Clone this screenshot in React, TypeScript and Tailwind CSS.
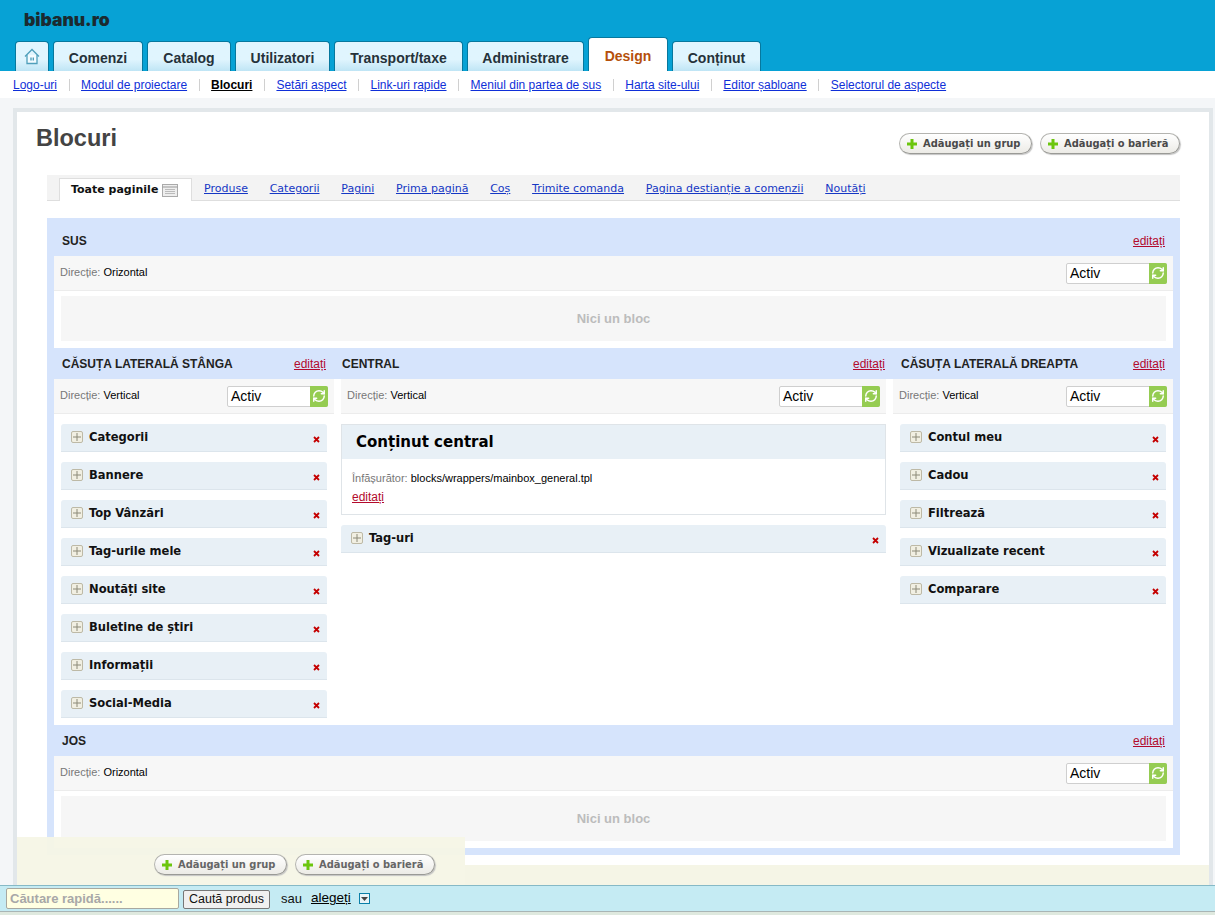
import { RefreshCw } from 'lucide-react';

const sans = "font-['Liberation_Sans',Arial,sans-serif]";
const wide = "font-['DejaVu_Sans',Verdana,sans-serif]";
const cond = "font-['DejaVu_Sans_Condensed','DejaVu_Sans',Verdana,sans-serif]";

const mainTabs = [
  { label: 'Comenzi', w: 'w-[90px]' },
  { label: 'Catalog', w: 'w-[84px]' },
  { label: 'Utilizatori', w: 'w-[95px]' },
  { label: 'Transport/taxe', w: 'w-[129px]' },
  { label: 'Administrare', w: 'w-[117px]' },
  { label: 'Design', w: 'w-[80px]', active: true },
  { label: 'Conținut', w: 'w-[89px]' },
];

const subLinks = ['Logo-uri', 'Modul de proiectare', 'Blocuri', 'Setări aspect', 'Link-uri rapide', 'Meniul din partea de sus', 'Harta site-ului', 'Editor șabloane', 'Selectorul de aspecte'];

const pageLinks = ['Produse', 'Categorii', 'Pagini', 'Prima pagină', 'Coș', 'Trimite comanda', 'Pagina destianție a comenzii', 'Noutăți'];

const leftBlocks = ['Categorii', 'Bannere', 'Top Vânzări', 'Tag-urile mele', 'Noutăți site', 'Buletine de știri', 'Informații', 'Social-Media'];
const rightBlocks = ['Contul meu', 'Cadou', 'Filtrează', 'Vizualizate recent', 'Comparare'];

function HomeIcon() {
  return (
    <svg width="16" height="17" viewBox="0 0 16 17" fill="none" stroke="#4f9fbb" strokeWidth="1.3">
      <path d="M1 8.5 8 1.5l7 7" />
      <path d="M3 7v8.5h10V7" fill="#f2fbff" />
      <rect x="6.3" y="9.5" width="1.4" height="3" fill="#4f9fbb" stroke="none" />
      <rect x="8.6" y="9.5" width="1.4" height="3" fill="#4f9fbb" stroke="none" />
    </svg>
  );
}

function GreenPlus() {
  return (
    <svg width="10" height="10" viewBox="0 0 10 10" className="shrink-0">
      <path d="M3.5 0h3v3.5H10v3H6.5V10h-3V6.5H0v-3h3.5z" fill="#6cc60e" />
    </svg>
  );
}

function PillButton({ label, w, dim }: { label: string; w: string; dim?: boolean }) {
  return (
    <button className={`${w} h-[21px] flex items-center gap-[6px] pl-[7px] rounded-[11px] border border-[#b4b4b0] border-b-[#9a9a96] border-r-[#9a9a96] bg-gradient-to-b from-white to-[#ecebe6] shadow-[1px_1px_1px_#c4c4c4]`}>
      <GreenPlus />
      <span className={`${cond} pt-px text-[11px] font-bold whitespace-nowrap ${dim ? 'text-[#666]' : 'text-[#4a4a4a]'}`}>{label}</span>
    </button>
  );
}

function Edit({ className = '' }: { className?: string }) {
  return <a className={`${sans} text-[12px] text-[#b30a2c] underline cursor-pointer ${className}`}>editați</a>;
}

function SectionHead({ title, className = '' }: { title: string; className?: string }) {
  return (
    <div className={`flex items-center justify-between px-[8px] ${className}`}>
      <span className={`${sans} text-[12px] font-bold text-[#222]`}>{title}</span>
      <Edit />
    </div>
  );
}

function StatusSelect() {
  return (
    <div className="flex h-[21px] w-[101px] rounded-[2px] border border-[#cfcfcf] bg-white">
      <span className={`${sans} flex-1 pl-[3px] text-[14px] leading-[19px] text-black`}>Activ</span>
      <span className="-my-px -mr-px flex w-[18px] items-center justify-center rounded-r-[2px] bg-[#95cc52]">
        <RefreshCw size={14} strokeWidth={2.5} className="text-white" />
      </span>
    </div>
  );
}

function DirectionBar({ value, className = '' }: { value: string; className?: string }) {
  return (
    <div className={`flex h-[35px] items-center justify-between border-b border-[#ececec] bg-[#f7f7f7] px-[6px] ${className}`}>
      <span className={`${sans} pb-[2px] text-[11px] text-[#777]`}>
        Direcție: <span className="text-black">{value}</span>
      </span>
      <StatusSelect />
    </div>
  );
}

function EmptyBlock() {
  return (
    <div className={`${sans} mx-[7px] mt-[5px] flex h-[45px] items-center justify-center bg-[#f6f6f6] text-[13px] font-bold text-[#bcbcbc]`}>
      Nici un bloc
    </div>
  );
}

function BlockRow({ label }: { label: string }) {
  return (
    <div className="flex h-[28px] items-start rounded-t-[3px] border-b border-[#dce5ec] bg-[#e8f0f6] pl-[10px] pr-[7px] pt-[7px]">
      <span className="flex h-[12px] w-[12px] items-center justify-center rounded-[2px] border border-[#bdb9a6] bg-[#f1efe2]">
        <svg width="8" height="8" viewBox="0 0 8 8"><path d="M4 0v8M0 4h8" stroke="#8c8a78" strokeWidth="1" /></svg>
      </span>
      <span className={`${cond} ml-[6px] flex-1 -mt-[2px] text-[12.8px] font-bold leading-[16px] text-[#111]`}>{label}</span>
      <svg width="7" height="7" viewBox="0 0 7 7" className="mt-[5px]"><path d="M1 1l5 5M6 1L1 6" stroke="#c40000" strokeWidth="1.8" /></svg>
    </div>
  );
}

function BlockList({ items }: { items: string[] }) {
  return (
    <div className="flex flex-col gap-[10px] px-[7px] pt-[10px]">
      {items.map(b => <BlockRow key={b} label={b} />)}
    </div>
  );
}

export default function App() {
  return (
    <div className={`${sans} relative h-[915px] w-[1215px] overflow-hidden bg-[#f4f6f8]`}>
      {/* Header */}
      <div className="h-[71px] bg-[#07a2d5] pl-[15px]">
        <div className="h-[37px] pl-[9px] pt-[9px] font-['Inter',sans-serif] text-[17.5px] font-black leading-[22px] text-[#1b2a30]">bibanu.ro</div>
        <div className="flex h-[34px] items-end gap-[4px]">
          <div className="flex h-[30px] w-[34px] items-center justify-center rounded-t-[4px] border border-b-0 border-[#06789e] bg-gradient-to-b from-[#e0f5fe] from-60% to-[#bfe5f5]">
            <HomeIcon />
          </div>
          {mainTabs.map(t => (
            <div
              key={t.label}
              className={`${t.w} flex items-center justify-center rounded-t-[4px] border border-b-0 border-[#06789e] text-[14px] font-bold ${t.active ? 'h-[34px] bg-white pt-[3px] text-[#b5500b]' : 'h-[30px] bg-gradient-to-b from-[#e0f5fe] from-60% to-[#bfe5f5] pt-[3px] text-[#25323a]'}`}
            >
              {t.label}
            </div>
          ))}
        </div>
      </div>

      {/* Sub navigation */}
      <div className="flex h-[27px] items-center bg-white pl-[13px] text-[12px]">
        {subLinks.map((l, i) => (
          <div key={l} className="flex items-center">
            {i > 0 && <span className="mx-[11.5px] h-[12px] w-px bg-[#d0d0d0]" />}
            <a className={`underline ${l === 'Blocuri' ? 'font-bold text-black' : 'text-[#0f2fd8]'}`}>{l}</a>
          </div>
        ))}
      </div>

      {/* Content */}
      <div className="ml-[13px] mr-[2px] mt-[10px] h-[807px] border-4 border-[#e2e7ea] bg-white pl-[18px] pr-[29px]">
        <div className="flex h-[63px] justify-between">
          <h1 className="pl-px pt-[10px] text-[23.5px] font-bold leading-[32px] text-[#444]">Blocuri</h1>
          <div className="flex gap-[8px] pt-[21px]">
            <PillButton label="Adăugați un grup" w="w-[133px]" />
            <PillButton label="Adăugați o barieră" w="w-[140px]" />
          </div>
        </div>

        <div className="ml-[12px] flex h-[26px] border-b border-[#dedede] bg-[#f3f3f3] pl-[12px]">
          <div className={`${wide} -mb-px mt-[3px] flex h-[23px] w-[133px] items-center gap-[4px] border border-b-0 border-[#dedede] bg-white pl-[11px] text-[11px] font-bold text-[#111]`}>
            Toate paginile
            <svg width="16" height="13" viewBox="0 0 16 13"><rect x=".5" y=".5" width="15" height="12" fill="#eee" stroke="#aaa" /><path d="M.5 3h15" stroke="#999" /><path d="M3 5.5h10M3 7.5h10M3 9.5h10" stroke="#bbb" /></svg>
          </div>
          <div className={`${wide} ml-[12px] flex items-center gap-[21.75px] pt-[4px] text-[11px] text-[#1537c4]`}>
            {pageLinks.map(l => <a key={l} className="underline whitespace-nowrap">{l}</a>)}
          </div>
        </div>

        {/* Layout panel */}
        <div className="ml-[12px] mt-[17px] h-[637px] bg-[#d6e4fc] px-[7px]">
          <SectionHead title="SUS" className="h-[38px] pt-[7px]" />
          <div className="h-[92px] bg-white">
            <DirectionBar value="Orizontal" />
            <EmptyBlock />
          </div>

          <div className="grid h-[31px] grid-cols-[280px_559px_280px]">
            <SectionHead title="CĂSUȚA LATERALĂ STÂNGA" />
            <SectionHead title="CENTRAL" />
            <SectionHead title="CĂSUȚA LATERALĂ DREAPTA" />
          </div>

          <div className="grid h-[346px] grid-cols-[280px_7px_545px_7px_280px] bg-white">
            <div>
              <DirectionBar value="Vertical" />
              <BlockList items={leftBlocks} />
            </div>
            <div />
            <div>
              <DirectionBar value="Vertical" />
              <div className="mt-[10px] border border-[#dfe4e8]">
                <div className={`${cond} flex h-[34px] items-center bg-[#e8f0f6] pl-[14px] text-[16.7px] font-bold text-black`}>Conținut central</div>
                <div className="h-[55px] pl-[10px] pt-[10px] text-[11px] leading-[19px] text-[#777]">
                  Înfășurător: <span className="text-black">blocks/wrappers/mainbox_general.tpl</span>
                  <div><Edit /></div>
                </div>
              </div>
              <div className="mt-[10px]"><BlockRow label="Tag-uri" /></div>
            </div>
            <div />
            <div>
              <DirectionBar value="Vertical" />
              <BlockList items={rightBlocks} />
            </div>
          </div>

          <SectionHead title="JOS" className="h-[31px] pt-px" />
          <div className="h-[92px] bg-white">
            <DirectionBar value="Orizontal" />
            <EmptyBlock />
          </div>
        </div>
      </div>

      {/* Sticky action strip */}
      <div className="absolute bottom-[30px] left-[17px] h-[48px] w-[448px] bg-[#f5f5e6]/95 pl-[137px] pt-[17px]">
        <div className="flex gap-[8px]">
          <PillButton label="Adăugați un grup" w="w-[133px]" dim />
          <PillButton label="Adăugați o barieră" w="w-[140px]" dim />
        </div>
      </div>
      <div className="absolute bottom-[30px] left-[465px] h-[20px] w-[744px] bg-[#f5f5e6]" />

      {/* Quick search bar */}
      <div className="absolute bottom-0 left-0 right-0 h-[30px] bg-[#dfe9df]">
        <div className="flex h-[27px] items-center border-y border-t-[#86b9c6] border-b-[#a9b5b5] bg-[#c5ebf3] pl-[6px]">
          <div className="flex h-[21px] w-[173px] items-center rounded-[2px] border border-[#a8a8a0] bg-[#ffffe2] pl-[3px] text-[13px] font-bold text-[#a8a8a8]">Căutare rapidă......</div>
          <button className="ml-[4px] mt-px h-[19px] w-[87px] rounded-[2px] border border-[#777] bg-[#f0f0f0] text-[12.5px] leading-[16px] text-[#111]">Caută produs</button>
          <span className="ml-[11px] text-[13px] text-[#111]">sau</span>
          <a className="ml-[9px] text-[13.5px] text-black underline">alegeți</a>
          <span className="ml-[8px] flex h-[11px] w-[11px] items-center justify-center border border-[#0a7fa8] bg-[#e8f4f8]">
            <svg width="7" height="4" viewBox="0 0 7 4"><path d="M0 0h7L3.5 4z" fill="#444" /></svg>
          </span>
        </div>
      </div>
    </div>
  );
}
